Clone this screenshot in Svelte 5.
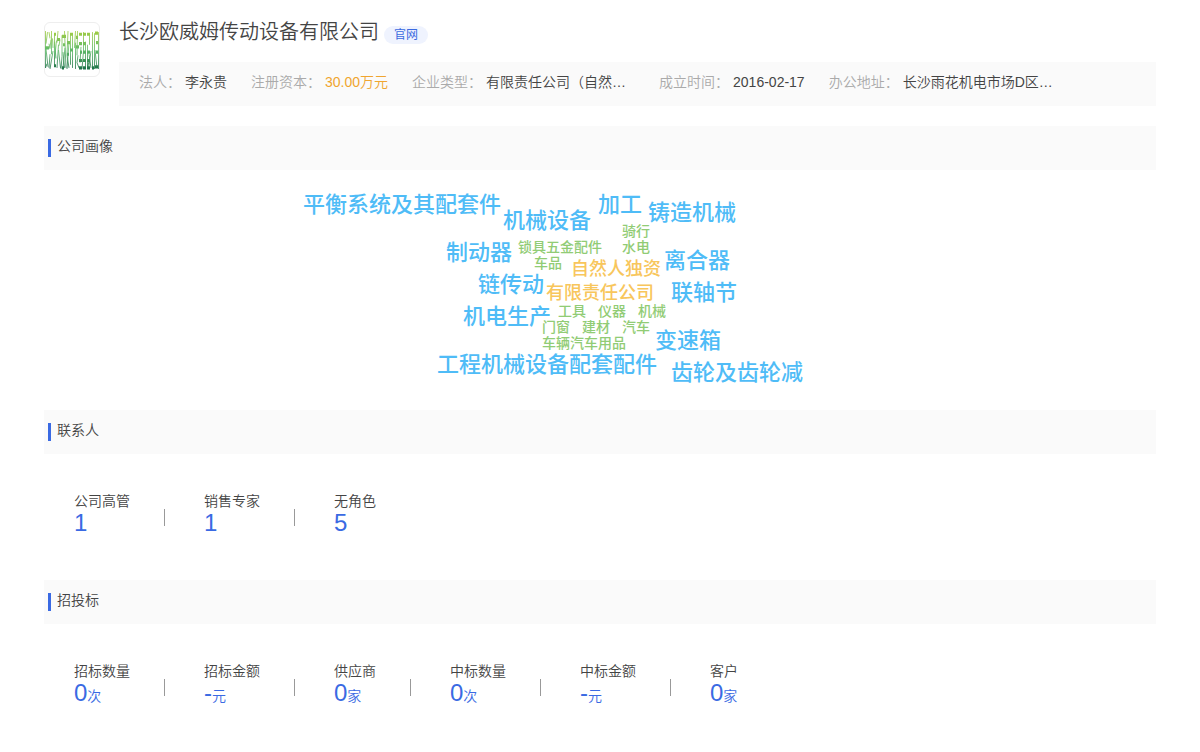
<script lang="ts">
	const info = [
		{ label: '法人', value: '李永贵' },
		{ label: '注册资本', value: '30.00万元', highlight: true },
		{ label: '企业类型', value: '有限责任公司（自然…', wide: true },
		{ label: '成立时间', value: '2016-02-17' },
		{ label: '办公地址', value: '长沙雨花机电市场D区…', wide: true }
	];

	// x = left edge, y = vertical middle of the word
	const words = [
		{ text: '平衡系统及其配套件', x: 303, y: 204, kind: 'product' },
		{ text: '机械设备', x: 503, y: 220, kind: 'product' },
		{ text: '加工', x: 598, y: 204, kind: 'product' },
		{ text: '铸造机械', x: 648, y: 212, kind: 'product' },
		{ text: '制动器', x: 446, y: 252, kind: 'product' },
		{ text: '离合器', x: 664, y: 260, kind: 'product' },
		{ text: '链传动', x: 478, y: 284, kind: 'product' },
		{ text: '联轴节', x: 671, y: 292, kind: 'product' },
		{ text: '机电生产', x: 463, y: 316, kind: 'product' },
		{ text: '变速箱', x: 655, y: 340, kind: 'product' },
		{ text: '工程机械设备配套配件', x: 437, y: 364, kind: 'product' },
		{ text: '齿轮及齿轮减', x: 671, y: 372, kind: 'product' },
		{ text: '自然人独资', x: 571, y: 268, kind: 'type' },
		{ text: '有限责任公司', x: 546, y: 292, kind: 'type' },
		{ text: '骑行', x: 622, y: 230, kind: 'trade' },
		{ text: '锁具五金配件', x: 518, y: 246, kind: 'trade' },
		{ text: '水电', x: 622, y: 246, kind: 'trade' },
		{ text: '车品', x: 534, y: 262, kind: 'trade' },
		{ text: '工具', x: 558, y: 310, kind: 'trade' },
		{ text: '仪器', x: 598, y: 310, kind: 'trade' },
		{ text: '机械', x: 638, y: 310, kind: 'trade' },
		{ text: '门窗', x: 542, y: 326, kind: 'trade' },
		{ text: '建材', x: 582, y: 326, kind: 'trade' },
		{ text: '汽车', x: 622, y: 326, kind: 'trade' },
		{ text: '车辆汽车用品', x: 542, y: 342, kind: 'trade' }
	];

	const contacts = [
		{ label: '公司高管', value: '1' },
		{ label: '销售专家', value: '1' },
		{ label: '无角色', value: '5' }
	];

	const bids = [
		{ label: '招标数量', value: '0', unit: '次' },
		{ label: '招标金额', value: '-', unit: '元' },
		{ label: '供应商', value: '0', unit: '家' },
		{ label: '中标数量', value: '0', unit: '次' },
		{ label: '中标金额', value: '-', unit: '元' },
		{ label: '客户', value: '0', unit: '家' }
	];
</script>

{#snippet stats(items)}
	<dl class="stats">
		{#each items as item}
			<div class="stat">
				<dt>{item.label}</dt>
				<dd>{item.value}{#if item.unit}<small>{item.unit}</small>{/if}</dd>
			</div>
		{/each}
	</dl>
{/snippet}

<main class="page">
	<header class="company">
		<div class="logo">
			<svg viewBox="1 1 54 38" preserveAspectRatio="none" aria-hidden="true">
				<defs>
					<linearGradient id="leaf" gradientUnits="userSpaceOnUse" x1="0" y1="0" x2="0" y2="40">
						<stop offset="0" stop-color="#a9cf3f" />
						<stop offset="0.5" stop-color="#5fba68" />
						<stop offset="1" stop-color="#176b45" />
					</linearGradient>
				</defs>
				<g fill="none" stroke="url(#leaf)" stroke-width="0.8">
					<path d="M1.500 2V37L3 33M3.500 3L2 14M2 19L4 36M5 3L6 9M5 14L6 19M5 37L6 24M7.500 2V24M7 10L6 18M8.500 9L9 18M9 21L6 38" />
					<path d="M10.500 4V36M10.500 12L12 28M12.500 11L10.500 29M14 2L13 13M16 10L15 16M14.500 15L13 37M14.500 20L16.500 37" />
					<path d="M18 6V26L17 38M19 22L20.500 37M21 18L19 37M20.500 2L22 37" />
					<path d="M24 2L23 25L25 37M25 13L23 38M26.500 5V34M28.500 5V37" />
					<path d="M31.500 2L30.500 18M31.500 13V38M33.500 2L33 25M34 25L33 32L35 37M37 17L36 32M39.500 3V21L38 38M41.500 12V36" />
					<path d="M43.500 15V36L45 31M45.500 4V15M47 21L44.500 38M45 24L47 37" />
					<path d="M48.500 3V38M50.500 4V38M51 20L53 37M54.500 3V38" />
				</g>
				<g fill="none" stroke="url(#leaf)" stroke-width="3">
					<path d="M1 18H5M10 5H12M10 35H12M13 10H16M18 7H22M19 15H21M23 13H26M26 5H29M26 20H29M32 8H34M32 17H35M23 24H25" />
					<path d="M35 5H38M35 14H38M36 22H38M35 30H38M35 37H38M39 5H42M39 14H42M39 22H42M39 30H42M39 37H42M43 5H46M43 22H46M43 30H46M43 37H46M51 4H54M52 13H54M52 22H54M51 36H54M18 37H20M48 37H50" />
				</g>
			</svg>
		</div>
		<div class="summary">
			<div class="name">
				<h1>长沙欧威姆传动设备有限公司</h1>
				<a class="site" href="#site">官网</a>
			</div>
			<dl class="info">
				{#each info as item}
					<div class="field">
						<dt>{item.label}：</dt>
						<dd class:highlight={item.highlight} class:wide={item.wide}>{item.value}</dd>
					</div>
				{/each}
			</dl>
		</div>
	</header>

	<section>
		<h2>公司画像</h2>
		<div class="portrait">
			<div class="cloud">
				{#each words as word}
					<span class={word.kind} style="left: {word.x - 300}px; top: {word.y - 181}px">{word.text}</span>
				{/each}
			</div>
		</div>
	</section>

	<section>
		<h2>联系人</h2>
		{@render stats(contacts)}
	</section>

	<section>
		<h2>招投标</h2>
		{@render stats(bids)}
	</section>
</main>

<style>
	:global(body) {
		margin: 0;
		background: #fff;
	}

	.page {
		padding: 22px 44px;
		color: #444;
		font-family: 'Liberation Sans', 'Noto Sans CJK SC', sans-serif;
		font-size: 14px;
		font-weight: 350;
		line-height: 20px;
	}

	h1,
	h2,
	dl,
	dd {
		margin: 0;
		font-weight: inherit;
	}

	.company {
		display: flex;
		align-items: flex-start;
		gap: 19px;
	}

	.logo {
		box-sizing: border-box;
		flex: none;
		display: flex;
		align-items: center;
		width: 56px;
		height: 55px;
		border: 1px solid #eee;
		border-radius: 6px;
		overflow: hidden;
	}

	.logo svg {
		width: 100%;
		height: 40px;
	}

	.summary {
		flex: 1;
		min-width: 0;
	}

	.name {
		display: flex;
		align-items: flex-start;
		gap: 5px;
		height: 40px;
	}

	h1 {
		font-size: 20px;
		line-height: 20px;
	}

	.site {
		margin-top: 4px;
		padding: 0 10px;
		border-radius: 9px;
		background: #eff3fe;
		color: #3b6ae0;
		font-size: 12px;
		font-weight: 400;
		line-height: 18px;
		text-decoration: none;
	}

	.info {
		display: flex;
		gap: 24px;
		padding: 10px 20px 14px;
		background: #fafafa;
		white-space: nowrap;
	}

	.field {
		display: flex;
		gap: 4px;
	}

	.field dt {
		color: #aaa;
	}

	.field .highlight {
		color: #f0a52f;
	}

	.wide {
		width: 149px;
	}

	section {
		margin-top: 20px;
	}

	h2 {
		display: flex;
		align-items: flex-start;
		gap: 6px;
		padding: 10px 4px 13px;
		background: #fafafa;
		font-size: 14px;
	}

	h2::before {
		content: '';
		width: 3px;
		height: 18px;
		margin-top: 3px;
		background: #3a6ae3;
	}

	.portrait {
		display: flex;
		justify-content: center;
		padding: 12px 0;
	}

	/* the words sit on a free canvas */
	.cloud {
		position: relative;
		width: 600px;
		height: 196px;
	}

	.cloud span {
		position: absolute;
		line-height: 20px;
		transform: translateY(-50%);
		font-weight: 500;
		white-space: nowrap;
	}

	.product {
		color: #4fbcf7;
		font-size: 22px;
	}

	.type {
		color: #f8c65c;
		font-size: 18px;
	}

	.trade {
		color: #91cc75;
		font-size: 14px;
	}

	.stats {
		display: flex;
		padding: 37px 30px 25px;
	}

	.stat {
		display: flex;
		flex-direction: column;
		position: relative;
		margin-right: 74px;
	}

	.stat:not(:last-child)::after {
		content: '';
		position: absolute;
		top: 18px;
		right: -35px;
		width: 1px;
		height: 17px;
		background: #999;
	}

	.stat dd {
		color: #3a6ae3;
		font-size: 24px;
		line-height: 24px;
	}

	.stat small {
		font-size: 14px;
	}
</style>
